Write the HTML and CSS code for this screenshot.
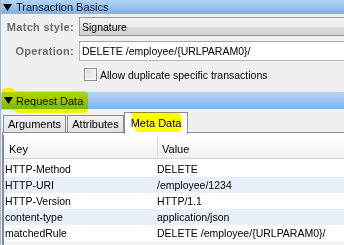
FILE: index.html
```html
<!DOCTYPE html>
<html>
<head>
<meta charset="utf-8">
<link rel="stylesheet" href="styles.css">
</head>
<body>
<div class="page">
  <div class="section-head top">
    <svg class="tri" width="9" height="7" viewBox="0 0 9 7"><polygon points="0,0 9,0 4.5,7" fill="#000"/></svg>
    <span>Transaction Basics</span>
  </div>
  <div class="form">
    <div class="row combo-row">
      <span class="lbl">Match style:</span>
      <div class="combo">Signature</div>
    </div>
    <div class="row op-row">
      <span class="lbl">Operation:</span>
      <div class="field">DELETE /employee/{URLPARAM0}/</div>
    </div>
    <div class="check-row">
      <span class="checkbox"></span>
      <span>Allow duplicate specific transactions</span>
    </div>
  </div>
  <div class="section-head req">
    <svg class="tri" width="9" height="7" viewBox="0 0 9 7"><polygon points="0,0 9,0 4.5,7" fill="#000"/></svg>
    <span>Request Data</span>
  </div>
  <div class="tabs">
    <div class="tab t-args">Arguments</div>
    <div class="tab t-attr">Attributes</div>
    <div class="tab t-meta active">Meta Data</div>
  </div>
  <div class="pane">
    <div class="table">
      <div class="thead">
        <div class="th th-key">Key</div>
        <div class="th th-val">Value</div>
      </div>
      <div class="tbody">
        <div class="tr"><div class="td key">HTTP-Method</div><div class="td val">DELETE</div></div>
        <div class="tr alt"><div class="td key">HTTP-URI</div><div class="td val">/employee/1234</div></div>
        <div class="tr"><div class="td key">HTTP-Version</div><div class="td val">HTTP/1.1</div></div>
        <div class="tr alt"><div class="td key">content-type</div><div class="td val">application/json</div></div>
        <div class="tr"><div class="td key">matchedRule</div><div class="td val">DELETE /employee/{URLPARAM0}/</div></div>
        <div class="tfoot"></div>
      </div>
    </div>
  </div>
  <svg class="hl" width="344" height="245" viewBox="0 0 344 245">
    <path d="M2,90 Q3,88 8,88 L12,88 Q14,89 15,91 L85,91 Q88,92 88,95 L88,110 Q87,113 83,113 L18,113 Q15,112 14,110 L2,110 Z" fill="#ffff00"/>
    <path d="M131,112 L178,113 Q181,114 181,117 L181,129 Q180,132 177,132 L138,132 Q135,131 134,128 Z" fill="#ffff00"/>
  </svg>
</div>
</body>
</html>
```
FILE: styles.css
```css
* { box-sizing: border-box; }
html, body { margin: 0; padding: 0; }
body {
  width: 344px;
  height: 245px;
  overflow: hidden;
  background: #f0f0f0;
  font-family: "Liberation Sans", Arial, sans-serif;
  font-size: 10.5px;
  color: #000;
}
.page {
  position: relative;
  height: 245px;
  border-left: 1px solid #a8b4c2;
  display: flex;
  flex-direction: column;
}
.section-head {
  display: flex;
  align-items: center;
  background: linear-gradient(#b2d6fa, #84b2e4);
  color: #111;
  font-size: 11px;
  flex: none;
}
.section-head .tri { flex: none; }
.section-head.top {
  height: 14px;
  border-bottom: 1px solid #9aaec4;
  padding: 1px 0 0 2px;
}
.section-head.top .tri { margin-right: 4px; }
.section-head.req {
  height: 17px;
  margin-top: 11px;
  padding-left: 3px;
}
.section-head.req .tri { margin-right: 3px; }
.form {
  display: flex;
  flex-direction: column;
  padding-top: 3px;
}
.row {
  display: flex;
  align-items: center;
}
.lbl {
  width: 73px;
  flex: none;
  text-align: right;
  font-weight: bold;
  font-size: 11px;
  letter-spacing: 0.3px;
  color: #6c6c6c;
  margin-right: 5px;
}
.combo-row { height: 19px; }
.combo {
  flex: 1;
  height: 19px;
  margin-right: -2px;
  border: 1px solid #9a9a9a;
  background: linear-gradient(#f3f3f3 0, #ececec 50%, #dddddd 50%, #d1d1d1 100%);
  padding-left: 2px;
  display: flex;
  align-items: center;
}
.op-row { height: 20px; margin-top: 5px; }
.field {
  flex: 1;
  height: 20px;
  margin-right: -2px;
  border: 1px solid #b4b6bb;
  border-top-color: #a5a7ac;
  background: #fff;
  padding-left: 2px;
  display: flex;
  align-items: center;
}
.check-row {
  display: flex;
  align-items: center;
  height: 13px;
  margin-top: 7px;
  padding-left: 83px;
}
.checkbox {
  width: 13px;
  height: 13px;
  flex: none;
  border: 1px solid #8e8f8f;
  background: linear-gradient(135deg, #dcdcdc, #f8f8f8);
  box-shadow: inset 0 0 0 1px #f4f4f4;
  margin-right: 3px;
}
.tabs {
  display: flex;
  align-items: flex-end;
  height: 20px;
  margin-top: 3px;
  padding-left: 2px;
  flex: none;
}
.tab {
  height: 17px;
  border: 1px solid #898c95;
  border-bottom: none;
  background: linear-gradient(#f3f3f3, #e2e2e2);
  display: flex;
  align-items: center;
  justify-content: center;
  font-size: 11px;
}
.t-args { width: 63px; }
.t-attr { width: 57px; margin-left: 1px; }
.t-meta { width: 64px; }
.tab.active {
  height: 22px;
  margin-bottom: -2px;
  background: #fff;
  position: relative;
  z-index: 1;
  padding-bottom: 2px;
}
.pane {
  flex: 1;
  margin-left: 1px;
  border-top: 1px solid #898c95;
  border-left: 1px solid #898c95;
  background: #fff;
  padding-top: 2px;
  display: flex;
  flex-direction: column;
}
.table {
  flex: 1;
  border-left: 1px solid #828790;
  display: flex;
  flex-direction: column;
  background: #fff;
}
.thead {
  display: flex;
  height: 24px;
  border-bottom: 1px solid #d5d5d5;
  background: linear-gradient(#ffffff, #f1f2f4);
  flex: none;
}
.th {
  display: flex;
  align-items: center;
  font-size: 11px;
  padding-top: 5px;
}
.th-key {
  width: 154px;
  padding-left: 5px;
  border-right: 1px solid #dcdcdc;
}
.th-val { flex: 1; padding-left: 4px; }
.tbody {
  flex: 1;
  padding-top: 2px;
  display: flex;
  flex-direction: column;
}
.tr {
  display: flex;
  height: 16px;
  align-items: center;
  flex: none;
}
.tr.alt { background: #eaf0fa; }
.td.key { width: 153px; padding-left: 1px; }
.td.val { flex: 1; }
.tfoot {
  flex: 1;
  background: #f1f1f1;
}
.hl {
  position: absolute;
  left: -1px;
  top: 0;
  pointer-events: none;
  mix-blend-mode: multiply;
  z-index: 5;
}
```
